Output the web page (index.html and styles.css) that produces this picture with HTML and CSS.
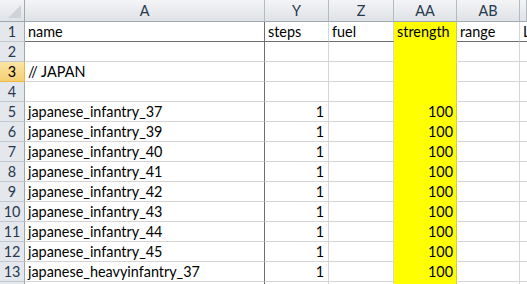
FILE: index.html
```html
<!DOCTYPE html>
<html lang="en">
<head>
    <meta charset="UTF-8">
    <title>units.xlsx</title>
    <link rel="stylesheet" href="styles.css">
</head>
<body>
    <div class="sheet">
        <!-- column headers -->
        <div class="corner"><span class="tri"></span></div>
        <div class="colhead">A</div>
        <div class="colhead">Y</div>
        <div class="colhead">Z</div>
        <div class="colhead">AA</div>
        <div class="colhead">AB</div>
        <div class="colhead"></div>

        <div class="rowhead">1</div>
        <div class="cell frozen-r frozen-b">name</div>
        <div class="cell frozen-b">steps</div>
        <div class="cell frozen-b">fuel</div>
        <div class="cell hl">strength</div>
        <div class="cell frozen-b">range</div>
        <div class="cell frozen-b">L</div>

        <div class="rowhead">2</div>
        <div class="cell frozen-r"></div>
        <div class="cell"></div>
        <div class="cell"></div>
        <div class="cell hl"></div>
        <div class="cell"></div>
        <div class="cell"></div>

        <div class="rowhead active">3</div>
        <div class="cell frozen-r">// JAPAN</div>
        <div class="cell"></div>
        <div class="cell"></div>
        <div class="cell hl"></div>
        <div class="cell"></div>
        <div class="cell"></div>

        <div class="rowhead">4</div>
        <div class="cell frozen-r"></div>
        <div class="cell"></div>
        <div class="cell"></div>
        <div class="cell hl"></div>
        <div class="cell"></div>
        <div class="cell"></div>

        <div class="rowhead">5</div>
        <div class="cell frozen-r">japanese_infantry_37</div>
        <div class="cell num">1</div>
        <div class="cell"></div>
        <div class="cell hl num">100</div>
        <div class="cell"></div>
        <div class="cell"></div>

        <div class="rowhead">6</div>
        <div class="cell frozen-r">japanese_infantry_39</div>
        <div class="cell num">1</div>
        <div class="cell"></div>
        <div class="cell hl num">100</div>
        <div class="cell"></div>
        <div class="cell"></div>

        <div class="rowhead">7</div>
        <div class="cell frozen-r">japanese_infantry_40</div>
        <div class="cell num">1</div>
        <div class="cell"></div>
        <div class="cell hl num">100</div>
        <div class="cell"></div>
        <div class="cell"></div>

        <div class="rowhead">8</div>
        <div class="cell frozen-r">japanese_infantry_41</div>
        <div class="cell num">1</div>
        <div class="cell"></div>
        <div class="cell hl num">100</div>
        <div class="cell"></div>
        <div class="cell"></div>

        <div class="rowhead">9</div>
        <div class="cell frozen-r">japanese_infantry_42</div>
        <div class="cell num">1</div>
        <div class="cell"></div>
        <div class="cell hl num">100</div>
        <div class="cell"></div>
        <div class="cell"></div>

        <div class="rowhead">10</div>
        <div class="cell frozen-r">japanese_infantry_43</div>
        <div class="cell num">1</div>
        <div class="cell"></div>
        <div class="cell hl num">100</div>
        <div class="cell"></div>
        <div class="cell"></div>

        <div class="rowhead">11</div>
        <div class="cell frozen-r">japanese_infantry_44</div>
        <div class="cell num">1</div>
        <div class="cell"></div>
        <div class="cell hl num">100</div>
        <div class="cell"></div>
        <div class="cell"></div>

        <div class="rowhead">12</div>
        <div class="cell frozen-r">japanese_infantry_45</div>
        <div class="cell num">1</div>
        <div class="cell"></div>
        <div class="cell hl num">100</div>
        <div class="cell"></div>
        <div class="cell"></div>

        <div class="rowhead">13</div>
        <div class="cell frozen-r">japanese_heavyinfantry_37</div>
        <div class="cell num">1</div>
        <div class="cell"></div>
        <div class="cell hl num">100</div>
        <div class="cell"></div>
        <div class="cell"></div>

        <div class="rowhead"></div>
        <div class="cell frozen-r"></div>
        <div class="cell"></div>
        <div class="cell"></div>
        <div class="cell hl"></div>
        <div class="cell"></div>
        <div class="cell"></div>
    </div>
</body>
</html>
```

FILE: styles.css
```css
body {
    margin: 0;
    background-color: #ffffff;
    font-family: Lato, "Open Sans", sans-serif;
    font-size: 14.4px;
    color: #000000;
    overflow: hidden;
}
.sheet {
    display: grid;
    grid-template-columns: 25px 240px 64px 65px 63px 63px 7px;
    grid-template-rows: 22px;
    grid-auto-rows: 20px;
    width: 527px;
}
.sheet > div {
    box-sizing: border-box;
    white-space: nowrap;
    overflow: hidden;
}
.corner {
    position: relative;
    background: linear-gradient(#f3f4f6, #dfe2e6);
    border-right: 1px solid #9fa7b1;
    border-bottom: 1px solid #9fa7b1;
}
.corner .tri {
    position: absolute;
    right: 3px;
    bottom: 3px;
    width: 0;
    height: 0;
    border-left: 13px solid transparent;
    border-bottom: 13px solid #cfd3d9;
}
.colhead {
    background: linear-gradient(#f3f4f6, #dfe2e6);
    border-right: 1px solid #b4bac2;
    border-bottom: 1px solid #9fa7b1;
    text-align: center;
    line-height: 21px;
    color: #27394f;
}
.rowhead {
    background-color: #e4e7eb;
    border-right: 1px solid #9fa7b1;
    border-bottom: 1px solid #c2c8cf;
    text-align: center;
    line-height: 20px;
    color: #27394f;
}
.rowhead.active {
    background: linear-gradient(#fbe4a6, #f6cf74);
    border-bottom: 1px solid #f1b642;
    border-right: 1px solid #f1b642;
    color: #000000;
}
.cell {
    border-right: 1px solid #d4d4d4;
    border-bottom: 1px solid #d4d4d4;
    padding: 0 3px;
    line-height: 20px;
}
.sheet > .cell:nth-child(7n) {
    border-right: none;
    padding: 0 0 0 3px;
}
.num {
    text-align: right;
    padding-right: 4px;
}
.frozen-r {
    border-right-color: #6e6e6e;
}
.frozen-b {
    border-bottom-color: #6e6e6e;
}
.hl {
    background-color: #ffff00;
    border-bottom-color: #ffff00;
    border-right-color: #cfcf40;
}
.hl.num {
    padding-right: 3px;
}
```
